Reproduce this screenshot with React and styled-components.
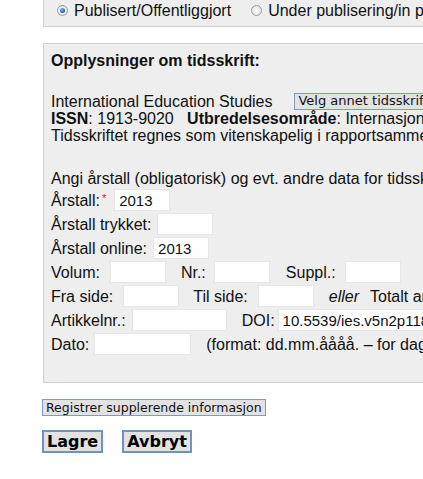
import styled, { createGlobalStyle } from "styled-components";

const GlobalStyle = createGlobalStyle`
   html, body {
      overflow: hidden;
   }
   body {
      margin: 0;
      background: #fff;
      font-family: "Liberation Sans", Arial, sans-serif;
      font-size: 16px;
      line-height: 17px;
      color: #111;
   }
`;

const Form = styled.div`
   padding: 0 0 8px 42px;
   width: 820px;
`;

const Panel = styled.div`
   margin-left: 1px;
   background-color: #eeeeee;
   border: 1px solid #cfcfcf;
   white-space: nowrap;
   overflow: hidden;
`;

const StatusPanel = styled(Panel)`
   border-top: none;
   box-sizing: border-box;
   height: 27px;
   padding: 2px 0 0 13px;
   display: flex;
   align-items: flex-start;
   gap: 6px;
`;

const RadioLabel = styled.label`
   display: flex;
   align-items: center;
   gap: 6px;
   margin-right: 14px;
   line-height: 17px;
`;

const Radio = styled.span`
   width: 11px;
   height: 11px;
   border-radius: 50%;
   box-sizing: border-box;
   border: 1px solid #9a9a9a;
   background: radial-gradient(circle, #ffffff 0%, #dcdcdc 100%);
   display: flex;
   align-items: center;
   justify-content: center;

   &::after {
      content: "";
      display: ${(p) => (p.$checked ? "block" : "none")};
      width: 5px;
      height: 5px;
      border-radius: 50%;
      background: radial-gradient(circle at 40% 35%, #7fb2e6 0%, #1d5fa8 70%, #123f75 100%);
   }
`;

const InfoPanel = styled(Panel)`
   margin-top: 16px;
   padding: 8px 8px 27px 7px;
`;

const Title = styled.div`
   font-weight: bold;
`;

const JournalRow = styled.div`
   margin-top: 23px;
   display: flex;
   align-items: center;
   height: 18px;
`;

const Line = styled.div``;

const SmallButton = styled.button`
   font-family: "DejaVu Sans", Verdana, sans-serif;
   font-size: ${(p) => p.$size ?? 12.5}px;
   color: #111;
   background: #e2e2e2;
   border: 1px solid #7f9bbd;
   padding: 0 3px;
   height: 17px;
   line-height: 14px;
   margin: 0;
`;

const JournalName = styled.span`
   margin-right: 22px;
`;

const Prompt = styled.div`
   margin-top: 26px;
`;

const Fields = styled.div`
   margin-top: 2px;
   display: flex;
   flex-direction: column;
   gap: 2px;
`;

const FieldRow = styled.div`
   display: flex;
   align-items: center;
   height: 22px;
`;

const Label = styled.span`
   margin-right: ${(p) => p.$gap ?? 6}px;
`;

const Required = styled.sup`
   color: #c8102e;
   font-size: 11px;
   margin-left: 2px;
   margin-right: 8px;
   line-height: 0;
   position: relative;
   top: -2px;
`;

const Input = styled.input`
   box-sizing: border-box;
   width: ${(p) => p.$w ?? 56}px;
   height: 22px;
   margin: 0 ${(p) => p.$after ?? 15}px 0 0;
   padding: 0 4px;
   border: 1px solid #e6e6e6;
   background: #fff;
   font-family: "Liberation Sans", Arial, sans-serif;
   font-size: 15px;
   color: #111;
   outline: none;
`;

const Or = styled.em`
   margin-right: 11px;
`;

const Extra = styled(SmallButton)`
   display: block;
   margin-top: 16px;
   margin-left: 0;
`;

const Actions = styled.div`
   margin-top: 14px;
   display: flex;
   gap: 19px;
`;

const BigButton = styled.button`
   box-sizing: border-box;
   font-family: "DejaVu Sans", Verdana, sans-serif;
   font-size: 16px;
   font-weight: bold;
   color: #000;
   background: #e2e2e2;
   border: 2px solid #6f93c0;
   height: 23px;
   padding: 0 3px;
   margin: 0;
   line-height: 18px;
`;

export default function App() {
   return (
      <>
         <GlobalStyle />
         <Form>
            <StatusPanel>
               <RadioLabel>
                  <Radio $checked />
                  Publisert/Offentliggjort
               </RadioLabel>
               <RadioLabel>
                  <Radio />
                  Under publisering/in press
               </RadioLabel>
            </StatusPanel>

            <InfoPanel>
               <Title>Opplysninger om tidsskrift:</Title>
               <JournalRow>
                  <JournalName>International Education Studies</JournalName>
                  <SmallButton $size={13}>Velg annet tidsskrift</SmallButton>
               </JournalRow>
               <Line>
                  <b>ISSN</b>: 1913-9020&nbsp;&nbsp;&nbsp;<b>Utbredelsesområde</b>: Internasjonal
               </Line>
               <Line>Tidsskriftet regnes som vitenskapelig i rapportsammenheng.</Line>

               <Prompt>Angi årstall (obligatorisk) og evt. andre data for tidsskriftartikkelen:</Prompt>
               <Fields>
                  <FieldRow>
                     <Label $gap={0}>Årstall:</Label>
                     <Required>*</Required>
                     <Input defaultValue="2013" />
                  </FieldRow>
                  <FieldRow>
                     <Label>Årstall trykket:</Label>
                     <Input />
                  </FieldRow>
                  <FieldRow>
                     <Label>Årstall online:</Label>
                     <Input defaultValue="2013" />
                  </FieldRow>
                  <FieldRow>
                     <Label $gap={10}>Volum:</Label>
                     <Input $after={15} />
                     <Label $gap={8}>Nr.:</Label>
                     <Input $after={16} />
                     <Label $gap={9}>Suppl.:</Label>
                     <Input />
                  </FieldRow>
                  <FieldRow>
                     <Label $gap={10}>Fra side:</Label>
                     <Input $after={14} />
                     <Label $gap={10}>Til side:</Label>
                     <Input />
                     <Or>eller</Or>
                     <Label>Totalt antall sider:</Label>
                     <Input />
                  </FieldRow>
                  <FieldRow>
                     <Label $gap={6}>Artikkelnr.:</Label>
                     <Input $w={95} />
                     <Label $gap={3}>DOI:</Label>
                     <Input $w={220} defaultValue="10.5539/ies.v5n2p118" />
                  </FieldRow>
                  <FieldRow>
                     <Label $gap={5}>Dato:</Label>
                     <Input $w={97} />
                     <span>(format: dd.mm.åååå. – for dagens dato kan du skrive «idag»)</span>
                  </FieldRow>
               </Fields>
            </InfoPanel>

            <Extra>Registrer supplerende informasjon</Extra>
            <Actions>
               <BigButton>Lagre</BigButton>
               <BigButton>Avbryt</BigButton>
            </Actions>
         </Form>
      </>
   );
}
